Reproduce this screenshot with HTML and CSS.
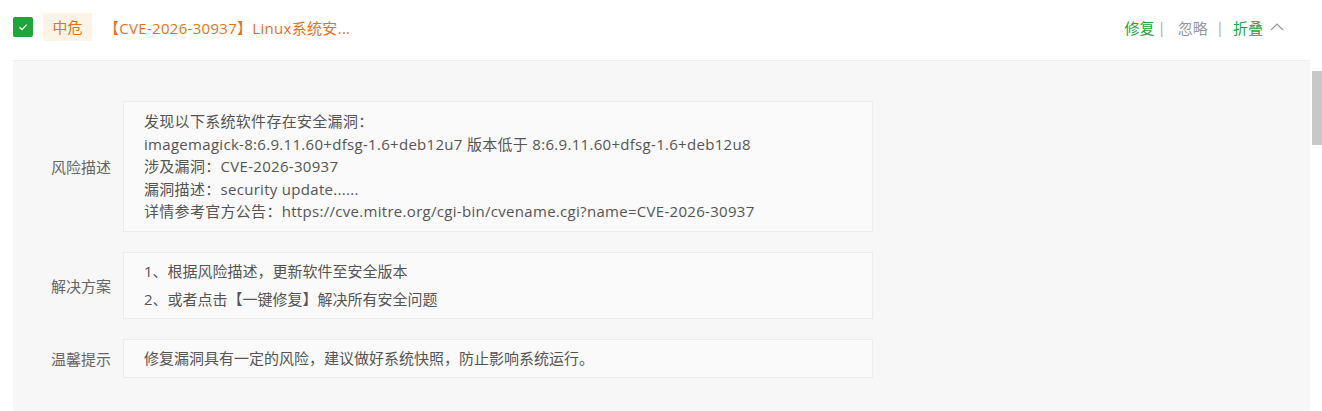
FILE: index.html
```html
<!DOCTYPE html>
<html lang="zh-CN">
<head>
    <meta charset="UTF-8">
    <meta name="viewport" content="width=device-width, initial-scale=1.0">
    <title>漏洞详情</title>
    <link rel="stylesheet" href="styles.css">
</head>
<body>
    <div class="page">
        <div class="vuln">
            <!-- header row: checkbox, level, title, actions -->
            <div class="vuln-head">
                <span class="check">
                    <svg width="12" height="12" viewBox="0 0 12 12"><path d="M2.5 6.2 L5 8.6 L9.6 3.6" fill="none" stroke="#fff" stroke-width="1.3"/></svg>
                </span>
                <span class="level">中危</span>
                <span class="vuln-title">【CVE-2026-30937】Linux系统安...</span>
                <div class="actions">
                    <a class="act fix">修复</a><span class="sep">|</span>
                    <a class="act ignore">忽略</a><span class="sep sep-2">|</span>
                    <a class="act fold">折叠</a>
                    <svg class="chevron" width="14" height="9" viewBox="0 0 14 9"><path d="M1 8 L7 2 L13 8" fill="none" stroke="#999" stroke-width="1.2"/></svg>
                </div>
            </div>

            <!-- expanded detail panel -->
            <div class="vuln-body">
                <div class="row">
                    <div class="label">风险描述</div>
                    <div class="box box-desc">
                        <p>发现以下系统软件存在安全漏洞：</p>
                        <p>imagemagick-8:6.9.11.60+dfsg-1.6+deb12u7 版本低于 8:6.9.11.60+dfsg-1.6+deb12u8</p>
                        <p>涉及漏洞：CVE-2026-30937</p>
                        <p>漏洞描述：security update......</p>
                        <p>详情参考官方公告：https://cve.mitre.org/cgi-bin/cvename.cgi?name=CVE-2026-30937</p>
                    </div>
                </div>
                <div class="row">
                    <div class="label">解决方案</div>
                    <div class="box">
                        <p>1、根据风险描述，更新软件至安全版本</p>
                        <p>2、或者点击【一键修复】解决所有安全问题</p>
                    </div>
                </div>
                <div class="row">
                    <div class="label">温馨提示</div>
                    <div class="box">
                        <p>修复漏洞具有一定的风险，建议做好系统快照，防止影响系统运行。</p>
                    </div>
                </div>
            </div>
        </div>

        <div class="scrollbar"><div class="thumb"></div></div>
    </div>
</body>
</html>
```

FILE: styles.css
```css
* {
    box-sizing: border-box;
    margin: 0;
    padding: 0;
}

body {
    font-family: "Open Sans", "Noto Sans CJK SC", sans-serif;
    font-size: 15px;
    color: #555;
    background: #fff;
    overflow: hidden;
}

.page {
    display: flex;
    height: 411px;
}

.vuln {
    flex: 1;
    display: flex;
    flex-direction: column;
    padding-left: 13px;
    padding-right: 2px;
}

/* header */
.vuln-head {
    display: flex;
    align-items: center;
    height: 28px;
    margin-top: 13px;
    margin-bottom: 19px;
}

.check {
    width: 20px;
    height: 20px;
    border-radius: 2px;
    background: #20a53a;
    display: flex;
    align-items: center;
    justify-content: center;
}

.level {
    margin-left: 10px;
    width: 49px;
    height: 28px;
    line-height: 28px;
    text-align: center;
    background: #fdf3e6;
    color: #e8721c;
    border-radius: 2px;
}

.vuln-title {
    margin-left: 12px;
    letter-spacing: 0.3px;
    color: #e8721c;
}

.actions {
    margin-left: auto;
    margin-right: 26px;
    display: flex;
    align-items: center;
}

.act {
    cursor: pointer;
}

.fix,
.fold {
    color: #20a53a;
}

.ignore {
    color: #999;
}

.sep {
    color: #aaa;
    margin: 0 12px 0 3px;
}

.sep-2 {
    margin: 0 9px 0 8px;
}

.chevron {
    margin-left: 7px;
    margin-top: -2px;
}

/* detail panel */
.vuln-body {
    flex: 1;
    background: #f7f7f7;
    border-top: 1px solid #efefef;
    padding-top: 40px;
}

.row {
    display: flex;
    align-items: center;
    margin-bottom: 20px;
}

.label {
    width: 98px;
    text-align: right;
    color: #666;
    margin-right: 12px;
}

.box {
    width: 750px;
    background: #fafafa;
    border: 1px solid #ececec;
    padding: 4px 20px 5px;
    line-height: 28px;
}

/* latin-heavy lines, spaced out a little */
.box-desc {
    padding: 8px 20px;
    line-height: 22.5px;
    letter-spacing: 0.3px;
}

/* side scrollbar */
.scrollbar {
    width: 10px;
    padding-top: 71px;
}

.thumb {
    height: 74px;
    background: #c8c8c8;
}
```
